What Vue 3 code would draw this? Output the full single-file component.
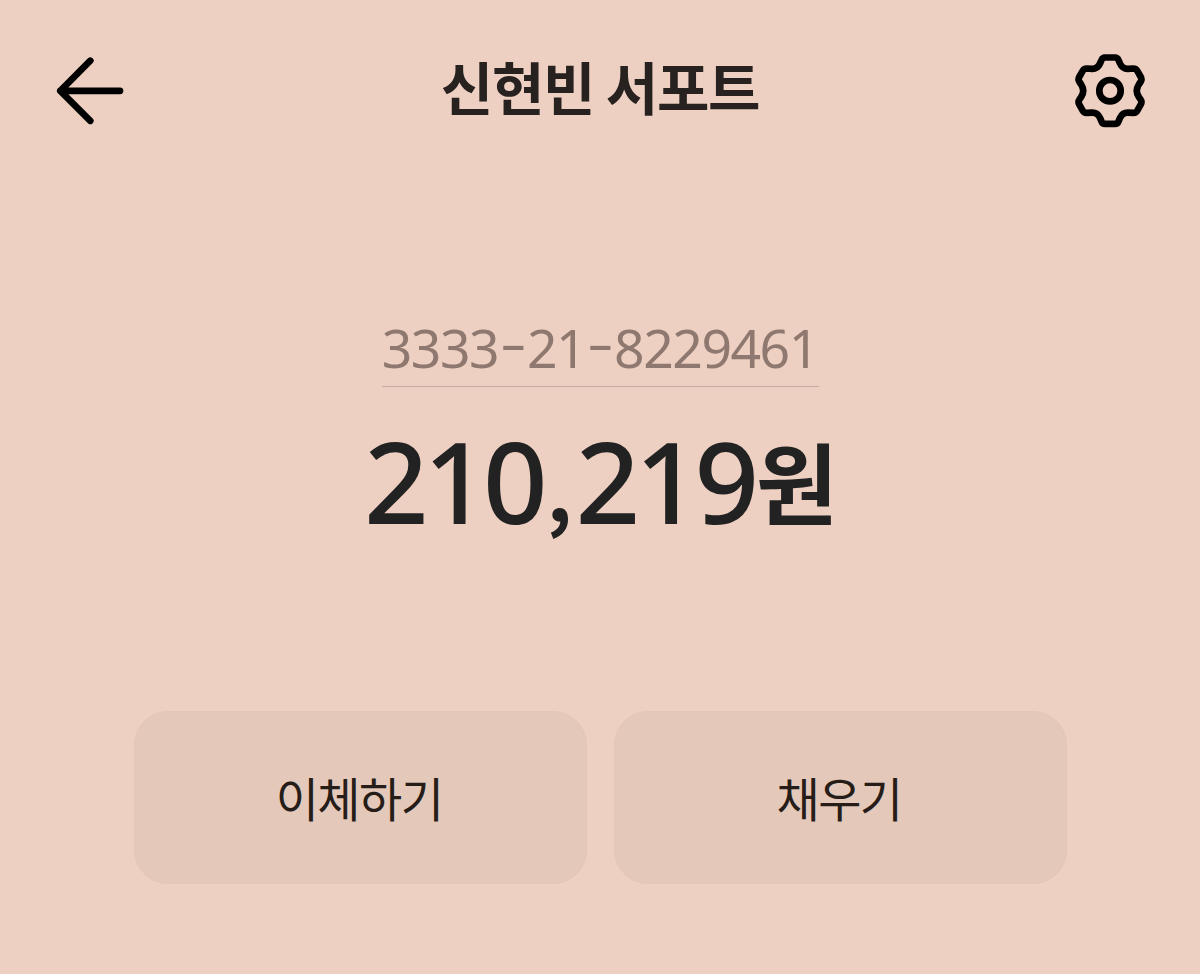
<script setup>

import { ref } from 'vue';

const accountName = ref('신현빈 서포트');
const accountNumber = ref('3333-21-8229461');
const balance = ref(210219);
const actions = ref(['이체하기', '채우기']);

function formatAmount(amount) {
    return amount.toLocaleString('en-US');
}

</script>

<template>
    <div class="screen">
        <header class="top-bar">
            <button class="icon-button" aria-label="뒤로">
                <svg width="100" height="100" viewBox="0 0 100 100">
                    <path d="M50.3 20.7 L20.3 50.8 L50.3 80.8 M20.3 50.8 H80" />
                </svg>
            </button>
            <h1 class="title">{{ accountName }}</h1>
            <button class="icon-button" aria-label="설정">
                <svg width="100" height="100" viewBox="0 0 100 100">
                    <path d="M45 17.5 H55 Q57.5 17.5 58.5 20 L60 23.5 Q62.5 29 68 28.8 L73.5 28.5 Q76 28.5 77.3 30.8 L80.8 37 Q82.2 39.5 80.5 42 L78.8 44.5 Q74.8 50.7 78.8 56.9 L80.5 59.4 Q82.2 61.9 80.8 64.4 L77.3 70.6 Q76 72.9 73.5 72.9 L68 72.6 Q62.5 72.4 60 77.9 L58.5 81.4 Q57.5 83.9 55 83.9 H45 Q42.5 83.9 41.5 81.4 L40 77.9 Q37.5 72.4 32 72.6 L26.5 72.9 Q24 72.9 22.7 70.6 L19.2 64.4 Q17.8 61.9 19.5 59.4 L21.2 56.9 Q25.2 50.7 21.2 44.5 L19.5 42 Q17.8 39.5 19.2 37 L22.7 30.8 Q24 28.5 26.5 28.5 L32 28.8 Q37.5 29 40 23.5 L41.5 20 Q42.5 17.5 45 17.5 Z" />
                    <circle cx="50" cy="50.7" r="10.7" />
                </svg>
            </button>
        </header>

        <section class="summary">
            <div class="account-number">
                <span v-for="(char, index) in accountNumber" :key="index"
                    :class="char === '-' ? 'dash' : 'digit'">{{ char }}</span>
            </div>
            <div class="balance">
                <span v-for="(char, index) in formatAmount(balance)" :key="index"
                    :class="char === ',' ? 'comma' : 'digit'">{{ char }}</span>
                <span class="won">원</span>
            </div>
        </section>

        <div class="actions">
            <button v-for="action in actions" :key="action" class="action">{{ action }}</button>
        </div>
    </div>
</template>

<style>
body {
    margin: 0;
    background-color: #edd0c2;
}
</style>

<style scoped>
.screen {
    box-sizing: border-box;
    width: 1200px;
    height: 974px;
    padding-top: 40px;
    background-color: #edd0c2;
    color: #222;
    font-family: "Noto Sans", "Noto Sans CJK KR", sans-serif;
    overflow: hidden;
}

button {
    padding: 0;
    border: none;
    background: none;
    color: inherit;
    font-family: inherit;
}

.top-bar {
    display: flex;
    align-items: center;
    justify-content: space-between;
    height: 100px;
    padding: 0 40px;
}

.icon-button {
    width: 100px;
    height: 100px;
}

.icon-button svg {
    display: block;
    fill: none;
    stroke: #000;
    stroke-width: 6.7;
    stroke-linecap: round;
    stroke-linejoin: round;
}

.title {
    margin: 0;
    font-family: "Noto Sans CJK KR", sans-serif;
    font-size: 57px;
    font-weight: 700;
    line-height: 91px;
    height: 100px;
    letter-spacing: -1.3px;
    color: #27211f;
}

.summary {
    display: flex;
    flex-direction: column;
    align-items: center;
    padding-top: 170px;
}

.account-number {
    display: flex;
    box-sizing: border-box;
    width: 437px;
    height: 77px;
    padding-left: 1px;
    border-bottom: 1px solid #c8aba0;
    color: #8e786f;
    font-size: 53.5px;
    line-height: 76px;
}

.account-number span {
    display: flex;
    justify-content: center;
    width: 29.1px;
}

.account-number .dash {
    line-height: 64px;
    transform: scaleX(1.55);
}

.balance {
    display: flex;
    height: 170px;
    padding: 12px 0 0 4px;
    font-size: 113px;
    font-weight: 500;
    line-height: 163px;
}

.balance span {
    display: flex;
    justify-content: center;
}

.balance .digit {
    width: 59.5px;
}

.balance .comma {
    box-sizing: border-box;
    width: 33px;
    padding-right: 4px;
    font-family: "Noto Sans CJK KR", sans-serif;
    font-size: 78px;
    font-weight: 700;
    line-height: 179px;
}

.balance .won {
    width: 81px;
    font-family: "Noto Sans CJK KR", sans-serif;
    font-size: 89px;
    font-weight: 700;
    line-height: 161px;
}

.actions {
    display: flex;
    justify-content: center;
    gap: 27px;
    padding-top: 142px;
}

.action {
    box-sizing: border-box;
    width: 453px;
    height: 173px;
    padding: 0 2px 3px 0;
    border: 1px solid #e3c6b8;
    border-radius: 34px;
    background-color: #e4c8ba;
    color: #271d18;
    font-family: "Noto Sans CJK KR", sans-serif;
    font-size: 47px;
    letter-spacing: -1.6px;
}
</style>
